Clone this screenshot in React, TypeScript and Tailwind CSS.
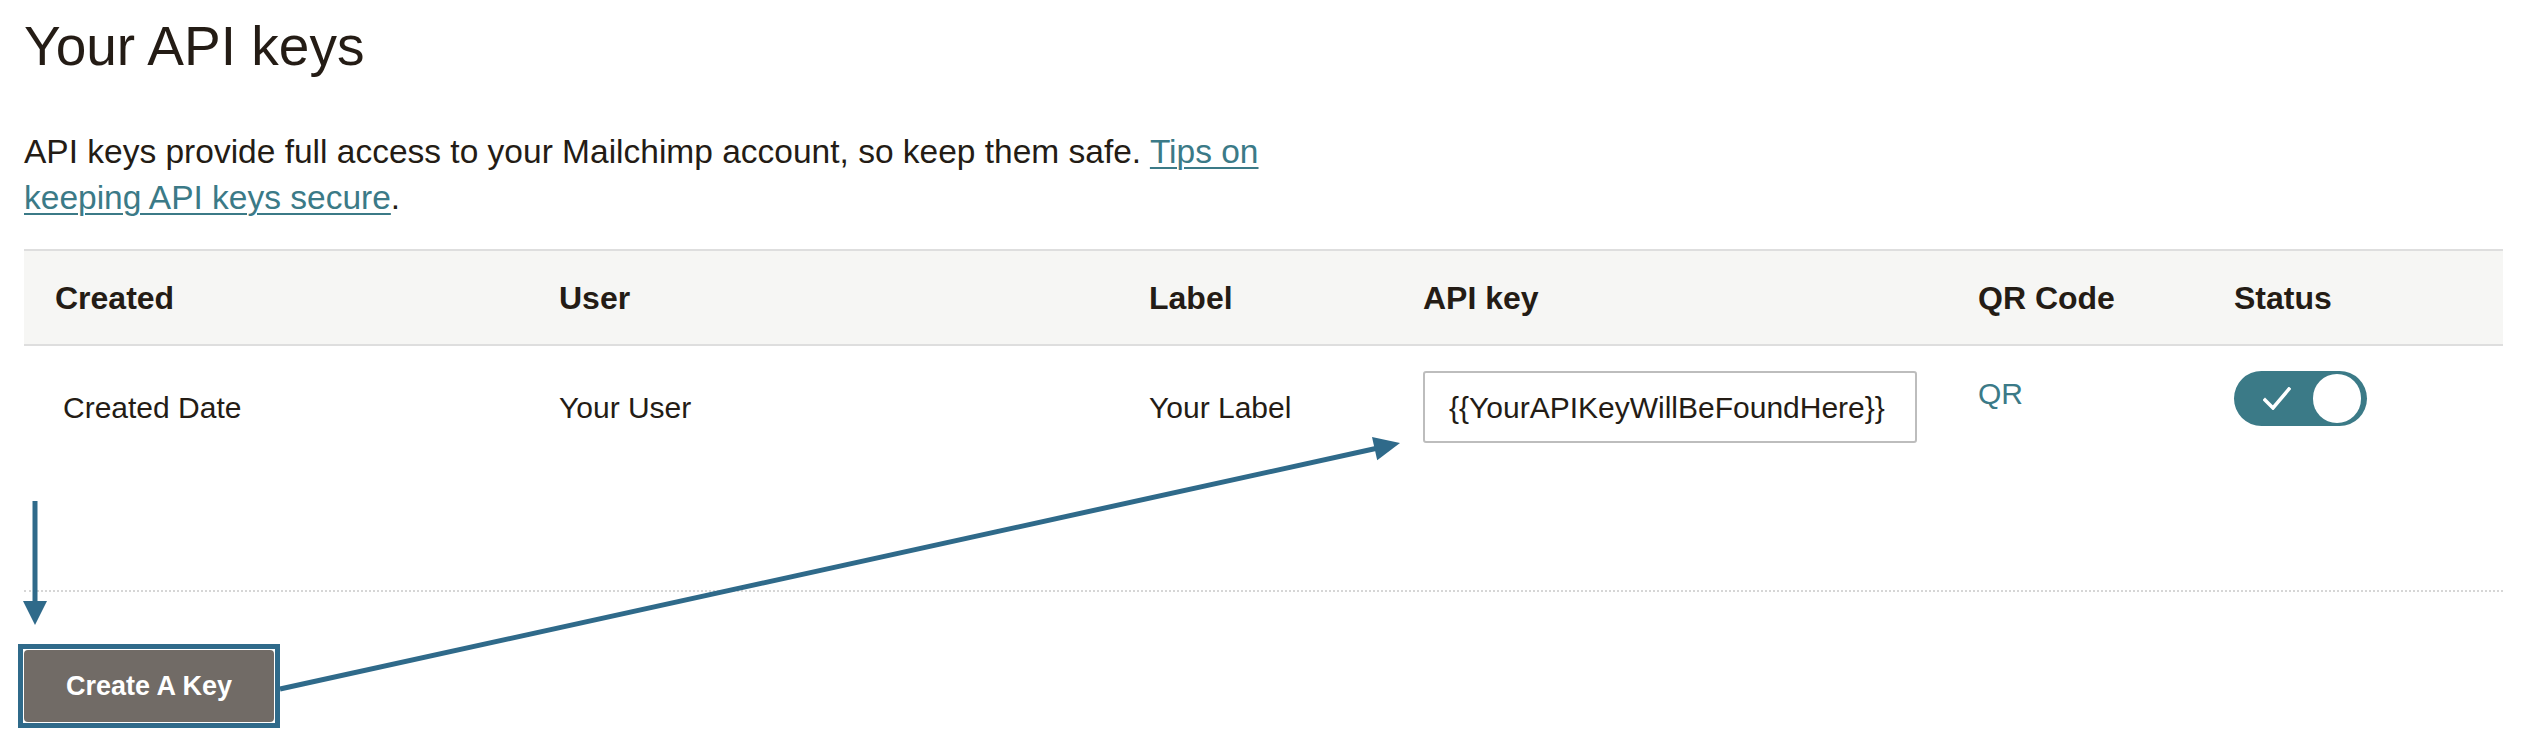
import React from 'react';

const columns = ['Created', 'User', 'Label', 'API key', 'QR Code', 'Status'];

const Toggle = () => (
  <div className="flex h-[55px] w-[133px] items-center justify-between rounded-full bg-[#3b7a87] pl-[29px] pr-[6px]">
    <svg width="28" height="23" viewBox="0 0 28 23" fill="none">
      <path d="M2 13 L10 21 L26 2" stroke="#ffffff" strokeWidth="3.5" strokeLinecap="square" />
    </svg>
    <div className="h-[49px] w-[48px] rounded-full bg-white" />
  </div>
);

const Annotations = () => (
  <svg className="pointer-events-none absolute inset-0" width="2524" height="732" viewBox="0 0 2524 732">
    <line x1="35" y1="501" x2="35" y2="604" stroke="#2f6a8a" strokeWidth="5" />
    <polygon points="23,601 47,601 35,625" fill="#2f6a8a" />
    <line x1="280" y1="689" x2="1378" y2="448" stroke="#2f6a8a" strokeWidth="5" />
    <polygon points="1400,443 1372,436.9 1377.2,460.3" fill="#2f6a8a" />
  </svg>
);

export default function App() {
  return (
    <div className="relative h-[732px] w-[2524px] overflow-hidden bg-white pl-[24px] pr-[21px] font-['Liberation_Sans',Arial,sans-serif] text-[#241c15]">
      <h1 className="mt-[19px] text-[55px] leading-none font-normal">Your API keys</h1>

      <p className="mt-[55px] max-w-[1290px] text-[33.5px] leading-[46px]">
        API keys provide full access to your Mailchimp account, so keep them safe.{' '}
        <a href="#" className="text-[#3b7a87] underline decoration-2 underline-offset-[4px]">
          Tips on keeping API keys secure
        </a>
        .
      </p>

      <div className="mt-[28px]">
        <div className="grid h-[97px] grid-cols-[504px_590px_274px_555px_256px_1fr] items-center border-y-2 border-[#dedede] bg-[#f6f6f4] pl-[31px]">
          {columns.map((c) => (
            <div key={c} className="text-[32px] font-bold">
              {c}
            </div>
          ))}
        </div>

        <div className="grid grid-cols-[504px_590px_274px_555px_256px_1fr] items-start pl-[31px] pt-[25px] pb-[147px] text-[30px]">
          <div className="flex h-[72px] items-center pl-[8px]">Created Date</div>
          <div className="flex h-[72px] items-center">Your User</div>
          <div className="flex h-[72px] items-center">Your Label</div>
          <div className="flex h-[72px] w-[494px] items-center rounded-[3px] border-2 border-[#bdbdbd] pl-[24px]">
            {'{{YourAPIKeyWillBeFoundHere}}'}
          </div>
          <div className="leading-[45px] text-[#3b7a87]">QR</div>
          <div>
            <Toggle />
          </div>
        </div>

        <div className="border-t-2 border-dotted border-[#d6d6d6]" />
      </div>

      <div className="mt-[52px] -ml-[6px] inline-block border-[5px] border-[#2f6a8a] p-[1px]">
        <button className="flex h-[72px] w-[250px] items-center justify-center rounded-[4px] bg-[#716b66] text-[27px] font-bold text-white">
          Create A Key
        </button>
      </div>

      <Annotations />
    </div>
  );
}
